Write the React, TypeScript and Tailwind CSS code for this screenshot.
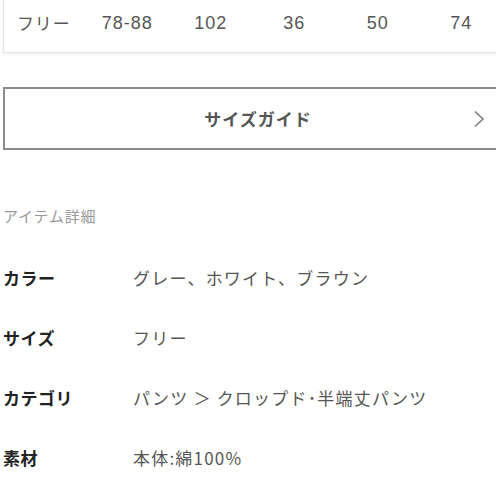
import React from "react";

const font = { fontFamily: '"Noto Sans CJK JP", "Noto Sans", sans-serif' };
const latin = { fontFamily: '"Liberation Sans", "Noto Sans CJK JP", sans-serif' };

export default function App() {
  const cells = ["フリー", "78-88", "102", "36", "50", "74"];
  const rows: [string, string][] = [
    ["カラー", "グレー、ホワイト、ブラウン"],
    ["サイズ", "フリー"],
    ["カテゴリ", "パンツ ＞ クロップド･半端丈パンツ"],
    ["素材", "本体:綿100%"],
  ];
  return (
    <div className="w-[496px] h-[496px] overflow-hidden bg-white" style={font}>
      <div className="ml-[3px] w-[520px] h-[53px] border-l border-b border-[#e4e4e4] shadow-[0_1px_3px_rgba(0,0,0,0.08)] flex items-center pb-[5px]">
        <div className="grid grid-cols-[repeat(6,83.5px)] text-[17px] text-[#555] -ml-[2px]">
          {cells.map((c, i) => (
            <div
              key={i}
              className={i === 0 ? "text-center tracking-[0.8px]" : "text-center text-[18px] tracking-[1px]"}
              style={i === 0 ? font : latin}
            >
              {c}
            </div>
          ))}
        </div>
      </div>
      <div className="mt-[34px] ml-[3px] w-[520px] h-[63px] border-2 border-[#8c8c8c] flex items-center">
        <div className="w-[500px] relative flex items-center justify-center">
          <span className="text-[17px] font-bold text-[#555] ml-[6px] tracking-[1px]">サイズガイド</span>
          <svg className="absolute left-[468px]" width="12" height="18" viewBox="0 0 12 18" fill="none">
            <path d="M2 1.5 L10 9 L2 16.5" stroke="#777" strokeWidth="1.5" />
          </svg>
        </div>
      </div>
      <div className="mt-[55px] ml-[3px] h-[22px] leading-[22px] text-[15px] text-[#999] tracking-[0.8px]">アイテム詳細</div>
      <div className="mt-[21px]">
        {rows.map(([k, v]) => (
          <div key={k} className="h-[60px] flex items-center">
            <div className="w-[133px] pl-[3px] text-[17px] font-bold text-[#222] tracking-[0.5px]">{k}</div>
            <div className="text-[17px] text-[#555] tracking-[1.2px]">{v}</div>
          </div>
        ))}
      </div>
    </div>
  );
}
